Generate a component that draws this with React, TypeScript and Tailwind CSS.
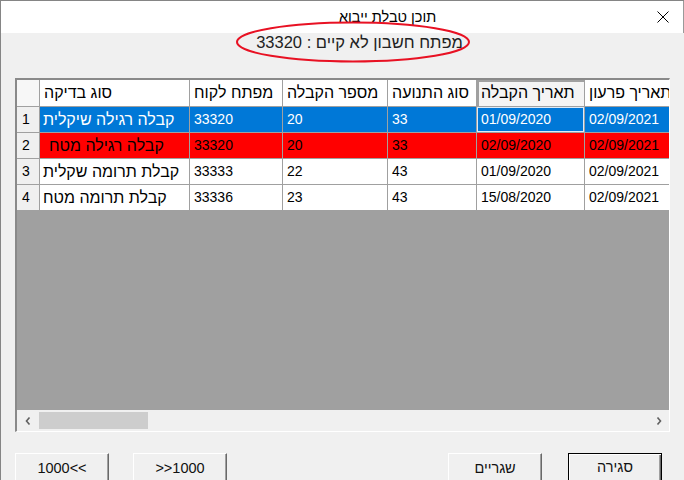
import React from 'react'

const cols = ['w-[23px]', 'w-[150px]', 'w-[93px]', 'w-[105px]', 'w-[89px]', 'w-[108px]', 'w-[110px]']

const headers = ['סוג בדיקה', 'מפתח לקוח', 'מספר הקבלה', 'סוג התנועה', 'תאריך הקבלה', 'תאריך פרעון']

interface Row {
    id: number
    tone: 'blue' | 'red' | 'white'
    cells: string[]
    firstPad?: string
}

const rows: Row[] = [
    { id: 1, tone: 'blue', cells: ['קבלה רגילה שיקלית', '33320', '20', '33', '01/09/2020', '02/09/2021'] },
    { id: 2, tone: 'red', cells: ['קבלה רגילה מטח', '33320', '20', '33', '02/09/2020', '02/09/2021'], firstPad: 'pl-[9px]' },
    { id: 3, tone: 'white', cells: ['קבלת תרומה שקלית', '33333', '22', '43', '01/09/2020', '02/09/2021'] },
    { id: 4, tone: 'white', cells: ['קבלת תרומה מטח', '33336', '23', '43', '15/08/2020', '02/09/2021'] },
]

const toneClass = {
    blue: 'bg-[#0078d7] text-white',
    red: 'bg-[#ff0000] text-black',
    white: 'bg-white text-black',
}

function Button({ label, primary }: { label: string; primary?: boolean }) {
    return (
        <div
            className={
                primary
                    ? 'w-[94px] h-[30px] shrink-0 flex justify-center pt-[5px] bg-[#f0f0f0] border border-black shadow-[inset_1px_1px_0_#ffffff,inset_-1px_-1px_0_#696969,inset_-2px_-2px_0_#a0a0a0]'
                    : 'w-[94px] h-[30px] shrink-0 flex justify-center pt-[6px] bg-[#f0f0f0] border border-t-white border-l-white border-r-[#696969] border-b-[#696969] shadow-[inset_-1px_-1px_0_#a0a0a0]'
            }
        >
            <span className="leading-[16px] text-[14.5px] text-[#111]">{label}</span>
        </div>
    )
}

export default function App() {
    return (
        <div className="relative w-[684px] h-[480px] overflow-hidden bg-[#f0f0f0] border-l border-t border-[#858585] font-['Liberation_Sans','DejaVu_Sans',sans-serif]">
            {/* Title bar */}
            <div className="flex items-center h-[32px] bg-white border-r border-[#9a9a9a]">
                <span className="ml-[338px] text-[14.5px] text-black leading-none">תוכן טבלת ייבוא</span>
                <div className="flex-1" />
                <svg width="12" height="12" viewBox="0 0 12 12" className="mr-[14px]">
                    <path d="M0.5 0.5 L11.5 11.5 M11.5 0.5 L0.5 11.5" stroke="#000" strokeWidth="1" />
                </svg>
            </div>

            {/* Message */}
            <div className="flex justify-center h-[45px] pt-[1px] pl-[34px]">
                <span className="text-[16.5px] leading-[16px] text-[#222]">מפתח חשבון לא קיים : 33320</span>
            </div>

            {/* red annotation */}
            <svg width="240" height="44" className="absolute left-[234px] top-[19px]">
                <ellipse cx="118" cy="22" rx="116" ry="19.5" fill="none" stroke="#e81123" strokeWidth="2" />
            </svg>

            {/* Grid */}
            <div className="ml-[14px] w-[655px] h-[354px] flex flex-col border-l-2 border-t-2 border-l-[#8a8a8a] border-t-[#8a8a8a] border-r border-b border-r-white border-b-white">
                <div className="overflow-hidden">
                    <div className="flex h-[27px] bg-white border-b border-[#a0a0a0] text-[16px]">
                        <div className={`${cols[0]} shrink-0 border-r border-[#a0a0a0] bg-[#f7f7f7]`} />
                        {headers.map((h, i) => (
                            <div
                                key={h}
                                className={`${cols[i + 1]} shrink-0 flex items-center pl-[4px] whitespace-nowrap overflow-hidden border-r border-[#a0a0a0] text-black ${
                                    i === 4 ? 'bg-[#f4f4f4] shadow-[inset_2px_2px_0_#a0a0a0]' : ''
                                }`}
                            >
                                {h}
                            </div>
                        ))}
                    </div>
                    {rows.map(row => (
                        <div key={row.id} className="flex h-[26px] border-b border-[#a0a0a0]">
                            <div className={`${cols[0]} shrink-0 flex items-center pl-[5px] bg-[#f0f0f0] border-r border-[#a0a0a0] text-black text-[14px]`}>
                                {row.id}
                            </div>
                            {row.cells.map((c, i) => (
                                <div
                                    key={i}
                                    className={`${cols[i + 1]} shrink-0 flex items-center whitespace-nowrap overflow-hidden border-r border-[#a0a0a0] ${toneClass[row.tone]} ${
                                        i === 0 ? `${row.firstPad ?? 'pl-[3px]'} text-[16px]` : 'pl-[4px] text-[14px]'
                                    } ${row.id === 1 && i === 4 ? 'shadow-[inset_0_0_0_1px_#dcebfa]' : ''}`}
                                >
                                    {c}
                                </div>
                            ))}
                        </div>
                    ))}
                </div>
                <div className="flex-1 bg-[#a0a0a0]" />
                {/* horizontal scrollbar */}
                <div className="flex h-[21px] pt-[2px] bg-[#f0f0f0]">
                    <div className="w-[22px] h-[17px] flex items-center justify-center">
                        <svg width="6" height="8" viewBox="0 0 6 8">
                            <path d="M4.5 0.5 L1.5 4 L4.5 7.5" fill="none" stroke="#606060" strokeWidth="1.6" />
                        </svg>
                    </div>
                    <div className="w-[109px] h-[17px] bg-[#cdcdcd]" />
                    <div className="flex-1" />
                    <div className="w-[21px] h-[17px] flex items-center justify-center">
                        <svg width="6" height="8" viewBox="0 0 6 8">
                            <path d="M1.5 0.5 L4.5 4 L1.5 7.5" fill="none" stroke="#606060" strokeWidth="1.6" />
                        </svg>
                    </div>
                </div>
            </div>

            {/* Buttons */}
            <div className="flex mt-[21px] pl-[14px]">
                <Button label="1000<<" />
                <div className="w-[24px]" />
                <Button label=">>1000" />
                <div className="flex-1" />
                <Button label="שגריים" />
                <div className="w-[26px]" />
                <Button label="סגירה" primary />
                <div className="w-[22px]" />
            </div>
        </div>
    )
}
